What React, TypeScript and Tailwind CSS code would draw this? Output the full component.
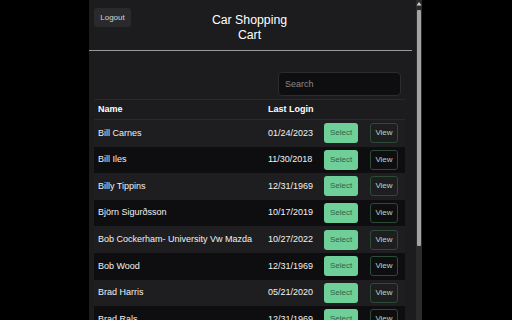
const rows = [
  { name: 'Bill Carnes', date: '01/24/2023' },
  { name: 'Bill Iles', date: '11/30/2018' },
  { name: 'Billy Tippins', date: '12/31/1969' },
  { name: 'Björn Sigurðsson', date: '10/17/2019' },
  { name: 'Bob Cockerham- University Vw Mazda', date: '10/27/2022' },
  { name: 'Bob Wood', date: '12/31/1969' },
  { name: 'Brad Harris', date: '05/21/2020' },
  { name: 'Brad Rals', date: '12/31/1969' },
];

export default function App() {
  return (
    <div
      className="w-[512px] h-[320px] bg-black flex overflow-hidden"
      style={{ fontFamily: '"Liberation Sans", Arial, sans-serif' }}
    >
      <div className="ml-[89px] w-[327px] h-full bg-[#1c1c1e] flex flex-col">
        {/* Header */}
        <div className="relative h-[50px] shrink-0 flex justify-center pt-[13px] pr-[6px]">
          <button className="absolute left-[5px] top-[8px] h-[19px] w-[37px] rounded-[3px] bg-[#2a2a2c] text-[8px] text-[#d4d4d4]">
            Logout
          </button>
          <h1 className="text-[12.3px] leading-[15px] text-white text-center">
            Car Shopping
            <br />
            Cart
          </h1>
        </div>
        <div className="h-px bg-[#9a9a9a] mr-[4px] shrink-0" />

        <div className="px-[5px] pt-[21px] flex flex-col">
          <div className="w-[311px] flex justify-end pr-[4px]">
            <input
              placeholder="Search"
              className="w-[123px] h-[24px] rounded-[4px] bg-[#0e0e10] border border-[#2c2c2e] px-[6px] text-[9px] text-white placeholder:text-[#8a8a8a] outline-none"
            />
          </div>

          <div className="mt-[3px] w-[311px] border-t border-[#29292b]">
            <div className="flex items-center h-[20px] border-b border-[#29292b] text-[9px] font-bold text-white">
              <div className="w-[170px] pl-[4px]">Name</div>
              <div className="w-[56px] pl-[4px]">Last Login</div>
            </div>
            {rows.map((r, i) => (
              <div
                key={r.name}
                className={
                  'flex items-center h-[26.6px] text-[9px] ' +
                  (i % 2 === 0 ? 'bg-[#1e1e20]' : 'bg-[#0e0e10]')
                }
              >
                <div className="w-[170px] pl-[4px] text-[#f2f2f2] whitespace-nowrap">{r.name}</div>
                <div className="w-[56px] pl-[4px] text-[#f2f2f2]">{r.date}</div>
                <div className="w-[46px] pl-[4px]">
                  <button className="w-[34px] h-[20px] rounded-[3px] bg-[#6fcf98] text-[8px] text-[#2f6348]">
                    Select
                  </button>
                </div>
                <div className="w-[39px] pl-[4px]">
                  <button className="w-[28px] h-[20px] rounded-[3px] border border-[#2b4a37] text-[8px] text-[#b4d9c2]">
                    View
                  </button>
                </div>
              </div>
            ))}
          </div>
        </div>
      </div>

      {/* Scrollbar */}
      <div className="w-[6px] h-full bg-[#2b2b2b] flex flex-col items-center">
        <svg width="6" height="8" viewBox="0 0 6 8" className="shrink-0">
          <path d="M3 2 L5.5 5.5 L0.5 5.5 Z" fill="#d0d0d0" />
        </svg>
        <div className="mt-[2px] w-[4px] h-[236px] rounded-[1px] bg-[#a4a4a4]" />
      </div>
    </div>
  );
}
